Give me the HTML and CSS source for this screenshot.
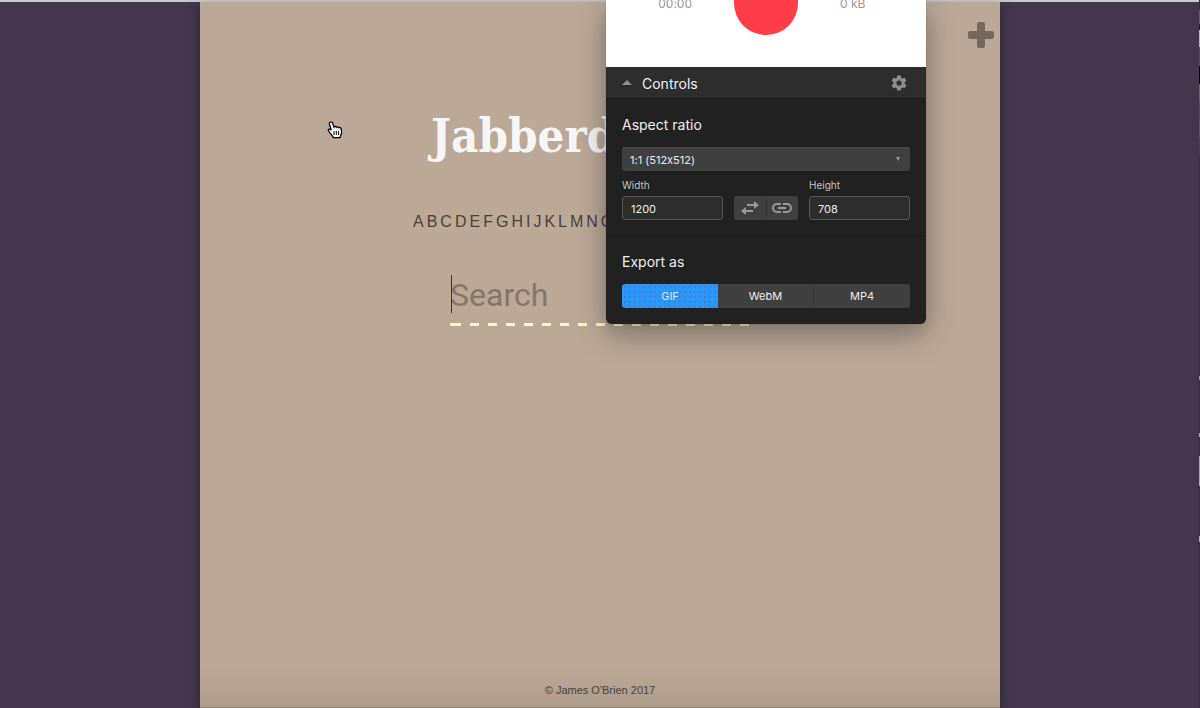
FILE: index.html
```html
<!DOCTYPE html>
<html lang="en">
<head>
<meta charset="utf-8">
<title>Jabberd</title>
<link rel="stylesheet" href="styles.css">
</head>
<body>
<main class="page">
  <button class="add" type="button" aria-label="Add">
    <svg width="26" height="26" viewBox="0 0 26 26"><path d="M11 0h4q2 0 2 2v7h7q2 0 2 2v4q0 2-2 2h-7v7q0 2-2 2h-4q-2 0-2-2v-7H2q-2 0-2-2v-4q0-2 2-2h7V2q0-2 2-2z" fill="#75675d"/></svg>
  </button>
  <h1 class="title">Jabberd</h1>
  <nav class="letters" aria-label="Letters">
    <a href="#a">A</a><a href="#b">B</a><a href="#c">C</a><a href="#d">D</a><a href="#e">E</a><a href="#f">F</a><a href="#g">G</a><a href="#h">H</a><a href="#i">I</a><a href="#j">J</a><a href="#k">K</a><a href="#l">L</a><a href="#m">M</a><a href="#n">N</a><a href="#o">O</a>
  </nav>
  <div class="search">
    <input class="search-input" type="text" placeholder="Search" aria-label="Search">
  </div>
  <footer class="footer">© James O'Brien 2017</footer>
</main>

<section class="recorder">
  <div class="record-bar">
    <span class="stat time">00:00</span>
    <button class="record" type="button" aria-label="Record"></button>
    <span class="stat">0 kB</span>
  </div>
  <div class="controls-bar">
    <svg width="10" height="5" viewBox="0 0 10 5"><path d="M0 5L5 0l5 5z" fill="#8d8d8d"/></svg>
    <span class="controls-title">Controls</span>
    <button class="gear" type="button" aria-label="Settings">
      <svg width="18" height="18" viewBox="0 0 24 24"><path fill="#8d8d8d" d="M19.430 12.980c.04-.32.07-.64.07-.98s-.03-.66-.07-.98l2.110-1.650c.19-.15.24-.42.12-.64l-2-3.460c-.12-.22-.39-.3-.61-.22l-2.490 1c-.52-.4-1.080-.73-1.690-.98l-.38-2.650C14.460 2.180 14.250 2 14 2h-4c-.25 0-.46.18-.49.42l-.38 2.650c-.61.25-1.170.59-1.690.98l-2.490-1c-.23-.09-.49 0-.61.22l-2 3.460c-.13.22-.07.49.12.64l2.110 1.650c-.04.32-.07.65-.07.98s.03.66.07.98l-2.110 1.650c-.19.15-.24.42-.12.64l2 3.460c.12.22.39.3.61.22l2.490-1c.52.4 1.080.73 1.690.98l.38 2.650c.03.24.24.42.49.42h4c.25 0 .46-.18.49-.42l.38-2.650c.61-.25 1.170-.59 1.690-.98l2.490 1c.23.09.49 0 .61-.22l2-3.460c.12-.22.07-.49-.12-.64l-2.110-1.650zM12 15.500a3.500 3.500 0 1 1 0-7 3.500 3.500 0 0 1 0 7z"/></svg>
    </button>
  </div>
  <div class="group">
    <label class="heading" for="ratio">Aspect ratio</label>
    <div class="select-wrap">
      <select class="ratio" id="ratio"><option>1:1 (512x512)</option></select>
      <svg class="select-arrow" width="4" height="4" viewBox="0 0 4 4"><path d="M0 0h4L2 4z" fill="#999"/></svg>
    </div>
    <div class="size-row">
      <div class="field">
        <label class="label" for="width">Width</label>
        <input class="number" id="width" type="text" value="1200">
      </div>
      <div class="link-buttons">
        <button type="button" aria-label="Swap sizes"><svg width="18" height="14" viewBox="0 0 18 14"><path d="M6 4h8M12 10H4" stroke="#999" stroke-width="2" fill="none"/><path d="M13 0l5 4-5 4zM5 6v8l-5-4z" fill="#999"/></svg></button>
        <button type="button" aria-label="Lock ratio"><svg width="20" height="10" viewBox="0 0 20 10"><path d="M9 1H5a4 4 0 0 0 0 8h4M11 1h4a4 4 0 0 1 0 8h-4M6 5h8" stroke="#999" stroke-width="2" fill="none"/></svg></button>
      </div>
      <div class="field">
        <label class="label" for="height">Height</label>
        <input class="number" id="height" type="text" value="708">
      </div>
    </div>
  </div>
  <div class="group export">
    <h2 class="heading">Export as</h2>
    <div class="formats">
      <button class="format active" type="button">GIF</button>
      <button class="format" type="button">WebM</button>
      <button class="format" type="button">MP4</button>
    </div>
  </div>
</section>

<svg class="pointer" width="16" height="18" viewBox="0 0 16 18" aria-hidden="true"><path d="M3.500 1C4.800.6 5.500 1.500 5.800 2.500L7 6c.8-.8 2-.6 2.400.2.800-.6 1.900-.3 2.300.5.900-.5 2.100 0 2.400 1 .5 1.600.8 3.300.3 5-.3 1.300-1.200 2.300-1.400 4H6.500C5.500 14.500 3.800 13 2.500 11.300 1.800 10.300.9 9.200 1.300 8.600c.7-1 2-.4 3 .6L2.400 3C2.100 2 2.500 1.300 3.500 1z" fill="#fff" stroke="#000" stroke-width="1.300"/><path d="M7 10v4M9.300 10v4M11.600 10v4" stroke="#000" fill="none"/></svg>
<div class="edge" aria-hidden="true"></div>
</body>
</html>
```
FILE: styles.css
```css
* { box-sizing: border-box; }

body {
  position: relative;
  margin: 0;
  min-height: 100vh;
  display: flex;
  justify-content: center;
  background: linear-gradient(#ccc9ca, #ccc9ca) top / 100% 2px no-repeat, #44364e;
  padding-top: 2px;
  font-family: "Liberation Sans", Arial, sans-serif;
}

button, input, select { font-family: inherit; margin: 0; }
button { border: 0; padding: 0; }
svg { display: block; }

.page {
  width: 100%;
  max-width: 800px;
  display: flex;
  flex-direction: column;
  align-items: center;
  background: linear-gradient(#bba897, #bba897) top / 100% calc(100% - 40px) no-repeat,
    linear-gradient(#bba897, #ad9b8b) bottom / 100% 40px no-repeat;
  border-bottom: 1px solid #8a7b71;
  box-shadow: 0 4px 10px rgba(0, 0, 0, .4);
  color: #4b4039;
}

.add {
  align-self: flex-end;
  margin: 20px 6px 0 0;
  background: none;
}

.title {
  width: 338px;
  margin: 58px 0 0;
  font-family: "DejaVu Serif Condensed", "DejaVu Serif", serif;
  font-size: 47px;
  font-weight: 700;
  line-height: 60px;
  color: #f6f6f6;
}

.letters {
  width: 374px;
  margin-top: 46px;
  display: flex;
  gap: 3px;
  font-size: 16px;
  line-height: 20px;
}
.letters a { color: inherit; text-decoration: none; }

.search {
  position: relative;
  width: 300px;
  margin-top: 40px;
  padding-bottom: 3px;
  background: linear-gradient(#fdf8c9, #fdf8c9) 0 100% / 2px 3px no-repeat,
    repeating-linear-gradient(90deg, #fdf8c9 0 9px, transparent 9px 18px) 2px 100% / 298px 3px no-repeat;
}
.search::before {
  content: "";
  position: absolute;
  left: 1px;
  top: 3px;
  width: 1px;
  height: 38px;
  background: #3c332d;
}
.search-input {
  display: block;
  width: 100%;
  height: 51px;
  padding: 0 0 6px;
  border: 0;
  outline: 0;
  background: none;
  font-family: Roboto, sans-serif;
  font-size: 32px;
}
.search-input::placeholder { color: #85766b; opacity: 1; }

.footer {
  margin: auto 0 10px;
  font-size: 11px;
  line-height: 14px;
}

.recorder {
  position: absolute;
  top: 0;
  left: calc(50% + 6px);
  width: 320px;
  border-radius: 0 0 6px 6px;
  background: #212121;
  box-shadow: 0 0 1px rgba(0, 0, 0, .6), 0 10px 30px rgba(0, 0, 0, .35);
  color: #f0f0f0;
  font-family: Inter, sans-serif;
  font-feature-settings: "calt" 0;
}

.record-bar {
  height: 67px;
  display: grid;
  grid-template-columns: 1fr 64px 1fr;
  column-gap: 42px;
  background: #fff;
}
.stat {
  font-size: 12px;
  line-height: 8px;
  color: #999;
}
.time { justify-self: end; }
.record {
  width: 64px;
  height: 64px;
  margin-top: -29px;
  border-radius: 50%;
  background: #fe3d48;
}

.controls-bar {
  height: 32px;
  padding: 0 16px;
  display: flex;
  align-items: center;
  gap: 10px;
  background: #2d2d2d;
  border-bottom: 1px solid #191919;
}
.controls-title { flex: 1; padding-top: 2px; font-size: 14px; line-height: 20px; }
.gear { margin-right: 2px; background: none; }

.group { padding: 16px; }
.heading {
  display: block;
  margin: 0 0 12px;
  font-size: 14px;
  font-weight: 400;
  line-height: 20px;
}

.select-wrap { position: relative; }
.ratio {
  appearance: none;
  display: block;
  width: 100%;
  height: 24px;
  padding: 0 8px;
  border: 0;
  border-top: 1px solid #4a4a4a;
  border-radius: 3px;
  background: #404040;
  color: #eee;
  font-size: 11px;
  font-feature-settings: inherit;
}
.select-arrow { position: absolute; right: 10px; top: 10px; pointer-events: none; }

.size-row {
  margin-top: 7px;
  display: flex;
  align-items: flex-end;
  gap: 11px;
}
.field { flex: 1; }
.label {
  display: block;
  margin-bottom: 4px;
  font-size: 10px;
  line-height: 14px;
  color: #c6c6c6;
}
.number {
  display: block;
  width: 100%;
  height: 24px;
  padding: 2px 8px 0;
  border: 1px solid #5b5759;
  border-radius: 3px;
  background: #2d2d2d;
  color: #eee;
  font-size: 11px;
}
.link-buttons { display: flex; width: 64px; }
.link-buttons button {
  flex: 1;
  height: 24px;
  display: flex;
  align-items: center;
  justify-content: center;
  background: #404040;
}
.link-buttons button:first-child { border-radius: 3px 0 0 3px; border-right: 1px solid #353535; }
.link-buttons button:last-child { border-radius: 0 3px 3px 0; }

.export { border-top: 1px solid #1a1a1a; padding-top: 15px; }
.formats {
  display: grid;
  grid-template-columns: repeat(3, 1fr);
  overflow: hidden;
  border-radius: 3px;
}
.format {
  height: 24px;
  padding-bottom: 1px;
  background: #404040;
  border-right: 1px solid #353535;
  color: #eee;
  font-size: 11px;
}
.format:last-child { border-right: 0; }
.format.active {
  border: 0;
  background: radial-gradient(circle, #5575c0 0 1px, transparent 1px) 0 0 / 5px 5px, #2898fb;
  color: #d5e8fb;
}

.pointer { position: absolute; left: 327px; top: 121px; }

.edge {
  position: absolute;
  top: 0;
  right: 0;
  bottom: 0;
  width: 1px;
  background: linear-gradient(#333 10px, #526086 10px 24px, #222 24px 30px, #bbb 30px 47px, #176c5c 47px 66px, #000 66px 84px, #62658a 84px 102px, #176c5c 102px 120px, #78502d 120px 138px, #8d1c4a 138px 156px, #333 156px 376px, #999 376px 380px, #333 380px 433px, #aaa 433px 437px, #333 437px 456px, #aaa 456px 486px, #333 486px 536px, #aaa 536px 542px, #333 542px);
}
```
